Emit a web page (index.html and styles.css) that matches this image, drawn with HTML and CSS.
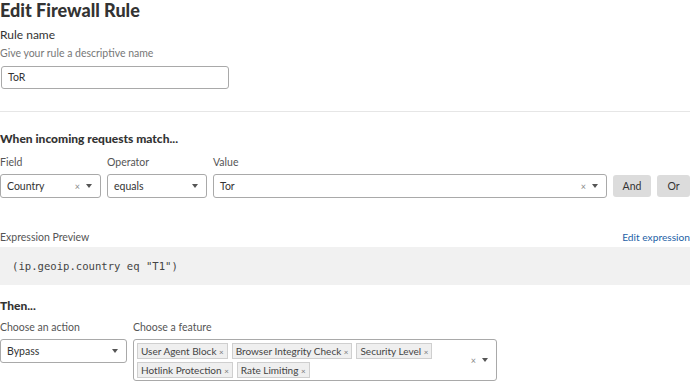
FILE: index.html
```html
<!DOCTYPE html>
<html lang="en">
  <head>
    <meta charset="UTF-8" />
    <meta name="viewport" content="width=device-width, initial-scale=1.0" />
    <title>Edit Firewall Rule</title>
    <link rel="stylesheet" href="styles.css">
  </head>
  <body>
    <div class="page">
      <h1>Edit Firewall Rule</h1>

      <div class="rule-name">
        <p class="label">Rule name</p>
        <p class="hint">Give your rule a descriptive name</p>
        <div class="text-input">ToR</div>
      </div>

      <hr class="divider" />

      <h2>When incoming requests match...</h2>
      <div class="match-row">
        <div class="col col-field">
          <p class="small-label">Field</p>
          <div class="select">
            <span class="select-value">Country</span>
            <span class="clear">&times;</span>
            <span class="caret"></span>
          </div>
        </div>
        <div class="col col-operator">
          <p class="small-label">Operator</p>
          <div class="select">
            <span class="select-value">equals</span>
            <span class="caret"></span>
          </div>
        </div>
        <div class="col col-value">
          <p class="small-label">Value</p>
          <div class="select">
            <span class="select-value">Tor</span>
            <span class="clear">&times;</span>
            <span class="caret"></span>
          </div>
        </div>
        <button class="btn btn-and">And</button>
        <button class="btn btn-or">Or</button>
      </div>

      <div class="preview-head">
        <p class="small-label">Expression Preview</p>
        <a class="edit-link" href="#">Edit expression</a>
      </div>
      <div class="preview">(ip.geoip.country eq "T1")</div>

      <h2 class="then">Then...</h2>
      <div class="action-row">
        <div class="col col-action">
          <p class="small-label">Choose an action</p>
          <div class="select">
            <span class="select-value">Bypass</span>
            <span class="caret"></span>
          </div>
        </div>
        <div class="col col-feature">
          <p class="small-label">Choose a feature</p>
          <div class="multi">
            <div class="tags">
              <span class="tag">User Agent Block <i>&times;</i></span>
              <span class="tag">Browser Integrity Check <i>&times;</i></span>
              <span class="tag">Security Level <i>&times;</i></span>
              <span class="tag">Hotlink Protection <i>&times;</i></span>
              <span class="tag">Rate Limiting <i>&times;</i></span>
            </div>
            <span class="clear">&times;</span>
            <span class="caret"></span>
          </div>
        </div>
      </div>
    </div>
  </body>
</html>
```

FILE: styles.css
```css
* {
  box-sizing: border-box;
}

body {
  margin: 0;
  background-color: #fff;
  font-family: Lato, "Open Sans", sans-serif;
  color: #333;
}

.page {
  width: 690px;
  height: 382px;
  overflow: hidden;
}

p {
  margin: 0;
}

h1 {
  margin: 0;
  font-size: 18px;
  line-height: 20px;
  font-weight: 900;
  color: #333;
}

.rule-name {
  margin-top: 7px;
}

.label {
  font-size: 12px;
  line-height: 16px;
  color: #333;
}

.hint {
  margin-top: 3px;
  font-size: 10.5px;
  line-height: 14px;
  color: #777;
}

.text-input {
  margin: 6px 0 0 1px;
  width: 228px;
  height: 23px;
  padding-left: 6px;
  border: 1px solid #a9a9a9;
  border-radius: 3px;
  font-size: 10.5px;
  line-height: 21px;
}

.divider {
  margin: 22px 0 0;
  border: none;
  border-top: 1px solid #e6e6e6;
}

h2 {
  margin: 19px 0 0;
  font-size: 12px;
  line-height: 16px;
  font-weight: 900;
  color: #333;
}

.small-label {
  font-size: 10.5px;
  line-height: 14px;
  color: #555;
}

.match-row {
  display: flex;
  align-items: flex-end;
  gap: 6px;
  margin-top: 8px;
}

.col {
  display: flex;
  flex-direction: column;
  gap: 5px;
}

.col-field {
  width: 101px;
}

.col-operator {
  width: 100px;
}

.col-value {
  width: 394px;
}

.select {
  display: flex;
  align-items: center;
  height: 24px;
  padding: 0 8px 0 6px;
  border: 1px solid #a9a9a9;
  border-radius: 3px;
  font-size: 10.5px;
}

.select-value {
  flex: 1;
}

.clear {
  font-size: 9px;
  color: #888;
  margin-right: 6px;
}

.caret {
  width: 0;
  height: 0;
  border-left: 3px solid transparent;
  border-right: 3px solid transparent;
  border-top: 4px solid #555;
}

.btn {
  height: 22px;
  margin-bottom: 1px;
  border: none;
  border-radius: 3px;
  background-color: #dcdcdc;
  color: #333;
  font-family: inherit;
  font-size: 10.5px;
  padding: 0;
  cursor: pointer;
}

.btn-and {
  width: 38px;
}

.btn-or {
  width: 33px;
}

.preview-head {
  display: flex;
  justify-content: space-between;
  align-items: center;
  height: 14px;
  margin-top: 32px;
}

.edit-link {
  font-size: 10.2px;
  line-height: 14px;
  color: #1d5fa6;
  text-decoration: none;
}

.preview {
  margin-top: 3px;
  height: 38px;
  padding-left: 12px;
  background-color: #f1f1f1;
  font-family: "DejaVu Sans Mono", monospace;
  font-size: 10.6px;
  line-height: 38px;
  color: #444;
}

.then {
  margin-top: 13px;
}

.action-row {
  display: flex;
  gap: 6px;
  margin-top: 6px;
}

.col-action {
  width: 127px;
}

.col-feature {
  width: 364px;
}

.multi {
  display: flex;
  align-items: center;
  height: 42px;
  padding: 3px 8px 3px 3px;
  border: 1px solid #a9a9a9;
  border-radius: 3px;
}

.tags {
  flex: 1;
  display: flex;
  flex-wrap: wrap;
  gap: 3px 4px;
}

.tag {
  height: 16px;
  padding: 0 3px;
  border: 1px solid #cfcfcf;
  background-color: #efefef;
  font-size: 10px;
  line-height: 14px;
  color: #444;
}

.tag i {
  font-style: normal;
  font-size: 8px;
  color: #777;
}
```
